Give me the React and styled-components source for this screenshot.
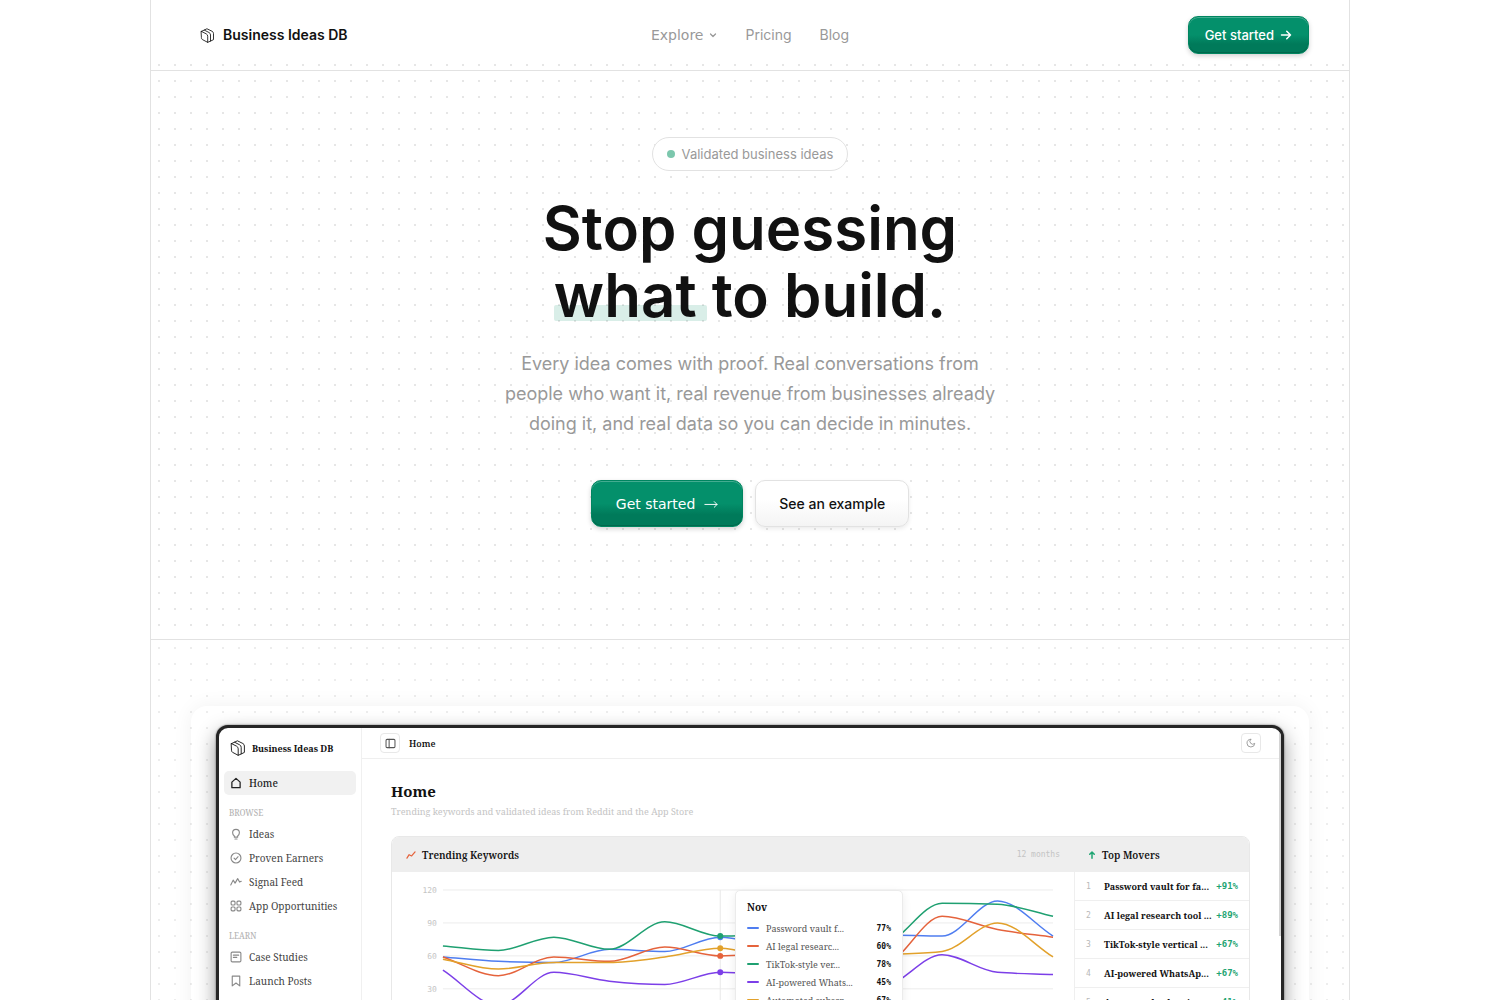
import React from 'react';
import styled, { createGlobalStyle, css } from 'styled-components';

const sans = `Inter, 'Liberation Sans', sans-serif`;
const humanist = `'DejaVu Sans', 'Noto Sans', sans-serif`;
const serif = `'Noto Serif', 'Liberation Serif', serif`;
const mono = `'DejaVu Sans Mono', 'Liberation Mono', monospace`;

const colors = {
  text: '#111111',
  muted: '#999999',
  line: '#e2e2e2',
  green: '#04906b',
  up: '#1fa573',
};

const GlobalStyle = createGlobalStyle`
  *, *::before, *::after {
    box-sizing: border-box;
  }
  body {
    margin: 0;
    background: #fff;
    color: ${colors.text};
    font-family: ${sans};
  }
  h1, h2, h3, p, ul, ol {
    margin: 0;
    padding: 0;
  }
  ul, ol {
    list-style: none;
  }
  a {
    color: inherit;
    text-decoration: none;
  }
  button {
    font: inherit;
    cursor: pointer;
  }
`;

const dots = (color) => css`
  background-image: radial-gradient(circle, ${color} 1px, transparent 1px);
  background-size: 16px 16px;
`;

const Page = styled.div`
  height: 100vh;
  overflow: hidden;
`;

const Shell = styled.div`
  max-width: 1200px;
  margin: 0 auto;
  border: 1px solid ${colors.line};
  border-width: 0 1px;
`;

const Header = styled.header`
  ${dots('#e6e6e6')}
  background-repeat: repeat-x;
  background-position: 0 57px;
  display: grid;
  grid-template-columns: 1fr auto 1fr;
  align-items: center;
  padding: 16px 40px;
  border-bottom: 1px solid ${colors.line};
`;

const Brand = styled.a`
  display: flex;
  align-items: center;
  gap: 8px;
  padding-left: 9px;
  font-size: 14px;
  font-weight: 600;
  line-height: 20px;
`;

const Nav = styled.nav`
  display: flex;
  align-items: center;
  gap: 28px;
  color: ${colors.muted};
  font-size: 14px;
  line-height: 20px;
`;

const NavButton = styled.button`
  display: flex;
  align-items: center;
  gap: 6px;
  padding: 0;
  border: 0;
  background: none;
  color: inherit;
  font-family: ${humanist};
  font-size: 14px;
`;

const PrimaryButton = styled.button`
  display: flex;
  align-items: center;
  justify-content: center;
  justify-self: end;
  gap: ${(p) => (p.$large ? 8 : 6)}px;
  height: ${(p) => (p.$large ? 47 : 38)}px;
  padding: 0 ${(p) => (p.$large ? 24 : 16)}px;
  border: 1px solid #008560;
  border-radius: 10px;
  background: linear-gradient(${colors.green} 50%, #007a5a 75%);
  box-shadow: inset 0 1px 0 rgba(255, 255, 255, 0.25),
    inset 0 -1px 0 rgba(0, 50, 36, 0.25), 0 2px 5px rgba(0, 0, 0, 0.18);
  color: #fff;
  font-family: ${(p) => (p.$large ? humanist : sans)};
  font-size: ${(p) => (p.$large ? 14 : 13)}px;
  font-weight: ${(p) => (p.$large ? 400 : 500)};
`;

const SecondaryButton = styled.button`
  height: 47px;
  padding: 0 23px;
  border: 1px solid ${colors.line};
  border-radius: 10px;
  background: linear-gradient(#fff 40%, #f4f4f4);
  box-shadow: 0 2px 4px rgba(0, 0, 0, 0.08);
  color: ${colors.text};
  font-size: 14px;
  font-weight: 500;
`;

const Hero = styled.section`
  ${dots('#e6e6e6')}
  background-position: 0 2px;
  display: flex;
  flex-direction: column;
  align-items: center;
  padding: 66px 24px 112px;
  border-bottom: 1px solid ${colors.line};
  text-align: center;
`;

const Pill = styled.p`
  display: flex;
  align-items: center;
  gap: 7px;
  height: 34px;
  padding: 0 14px;
  border: 1px solid ${colors.line};
  border-radius: 17px;
  background: #fff;
  color: ${colors.muted};
  font-size: 13px;
`;

const PillDot = styled.span`
  width: 8px;
  height: 8px;
  border-radius: 50%;
  background: #7cc7ad;
`;

const Title = styled.h1`
  margin-top: 24px;
  font-size: 60px;
  font-weight: 600;
  line-height: 67px;
`;

const Marked = styled.span`
  position: relative;
  z-index: 0;
  display: inline-block;
  &::after {
    content: '';
    position: absolute;
    z-index: -1;
    left: 0;
    right: -10px;
    bottom: 8px;
    height: 16px;
    border-radius: 2px;
    background: rgba(0, 143, 104, 0.15);
  }
`;

const Lead = styled.p`
  max-width: 520px;
  margin: 20px 0 41px;
  color: ${colors.muted};
  font-size: 18px;
  line-height: 30px;
`;

const Actions = styled.div`
  display: flex;
  gap: 12px;
`;

const Showcase = styled.section`
  ${dots('#ededed')}
  padding: 66px 40px;
`;

const Stage = styled.div`
  padding: 19px 25px 24px;
  border-radius: 16px;
  box-shadow: 0 0 20px rgba(0, 0, 0, 0.06);
`;

const Screen = styled.div`
  display: grid;
  grid-template-columns: 143px 1fr 2px;
  overflow: hidden;
  border: 3px solid #262626;
  border-radius: 12px;
  background: #fff;
  box-shadow: 0 8px 20px rgba(0, 0, 0, 0.42), 0 0 2px rgba(0, 0, 0, 0.6);
  font-family: ${serif};
`;

const Sidebar = styled.aside`
  padding: 0 5px;
  border-right: 1px solid #f0f0f0;
`;

const AppBrand = styled.div`
  display: flex;
  align-items: center;
  gap: 6px;
  height: 40px;
  margin-bottom: 3px;
  padding-left: 6px;
  font-size: 9px;
  font-weight: 700;
`;

const MenuLabel = styled.p`
  margin: 12px 0 3px;
  padding-left: 5px;
  color: #b5b5b5;
  font-size: 8px;
  font-weight: 500;
  line-height: 12px;
`;

const MenuItem = styled.a`
  display: flex;
  align-items: center;
  gap: 7px;
  height: 24px;
  padding-left: 6px;
  border-radius: 5px;
  background: ${(p) => (p.$active ? '#f1f1f1' : 'none')};
  color: ${(p) => (p.$active ? '#222' : '#444')};
  font-size: 10px;
  font-weight: ${(p) => (p.$active ? 500 : 400)};
  svg {
    color: ${(p) => (p.$active ? '#222' : '#888')};
  }
`;

const Topbar = styled.div`
  display: flex;
  align-items: center;
  gap: 9px;
  height: 31px;
  padding: 0 18px;
  border-bottom: 1px solid #efefef;
  font-size: 9px;
  font-weight: 600;
`;

const IconButton = styled.button`
  display: flex;
  align-items: center;
  justify-content: center;
  width: 20px;
  height: 20px;
  margin-left: ${(p) => (p.$end ? 'auto' : 0)};
  padding: 0;
  border: 1px solid #e8e8e8;
  border-radius: 4px;
  background: #fff;
  color: ${(p) => (p.$end ? '#999' : '#555')};
`;

const Content = styled.div`
  padding: 21px 29px 30px;
`;

const AppTitle = styled.h2`
  font-size: 15px;
  font-weight: 700;
  line-height: 22px;
`;

const AppSubtitle = styled.p`
  margin: 3px 0 17px;
  color: #c4c4c4;
  font-size: 9px;
  line-height: 14px;
`;

const Panel = styled.div`
  display: grid;
  grid-template-columns: 1fr 175px;
  border: 1px solid #e8e8e8;
  border-radius: 8px;
`;

const PanelHead = styled.div`
  display: flex;
  align-items: center;
  gap: 6px;
  height: 35px;
  padding: 0 14px;
  border-radius: ${(p) => (p.$end ? '0 7px 0 0' : '7px 0 0 0')};
  background: #eeeeee;
  h3 {
    font-size: 10px;
    font-weight: 600;
    line-height: 14px;
  }
`;

const Period = styled.span`
  margin-left: auto;
  color: #c4c4c4;
  font-family: ${mono};
  font-size: 8px;
`;

const ChartArea = styled.div`
  position: relative;
  svg {
    display: block;
    width: 100%;
    height: auto;
  }
  text {
    fill: #c4c4c4;
    font-family: ${mono};
    font-size: 8px;
    text-anchor: end;
  }
`;

const Tooltip = styled.div`
  position: absolute;
  top: 18px;
  left: calc(50% + 2px);
  width: 168px;
  padding: 8px 11px;
  border: 1px solid #ebebeb;
  border-radius: 5px;
  background: #fff;
  box-shadow: 0 3px 10px rgba(0, 0, 0, 0.08);
  color: #555;
  font-size: 9px;
  strong {
    display: block;
    margin-bottom: 4px;
    color: ${colors.text};
    font-size: 10px;
    line-height: 16px;
  }
`;

const TooltipRow = styled.li`
  display: flex;
  align-items: center;
  height: 18px;
  gap: 7px;
  b {
    margin-left: auto;
    color: ${colors.text};
    font-family: ${mono};
    font-size: 8px;
  }
`;

const Swatch = styled.span`
  width: 12px;
  height: 2px;
  border-radius: 1px;
  background: ${(p) => p.$color};
`;

const Movers = styled.ol`
  border-left: 1px solid #efefef;
`;

const Mover = styled.li`
  display: flex;
  align-items: center;
  height: 29px;
  padding: 0 11px;
  border-bottom: 1px solid #efefef;
  font-size: 9px;
  font-weight: 700;
`;

const Rank = styled.span`
  width: 18px;
  color: #b8b8b8;
  font-family: ${mono};
  font-size: 8px;
  font-weight: 400;
`;

const Change = styled.span`
  margin-left: auto;
  color: ${colors.up};
  font-family: ${mono};
  font-size: 9px;
`;

const Scrollbar = styled.div`
  height: 208px;
  background: #d4d4d4;
`;

const series = [
  { name: 'Password vault f...', value: '77%', color: '#4f7df0', data: [59, 55, 54, 66, 64, 77, 70, 75, 79, 78, 110, 78] },
  { name: 'AI legal researc...', value: '60%', color: '#e5633c', data: [59, 42, 59, 55, 68, 60, 62, 46, 53, 96, 84, 77] },
  { name: 'TikTok-style ver...', value: '78%', color: '#1fa071', data: [69, 65, 77, 66, 91, 78, 79, 62, 71, 108, 107, 96] },
  { name: 'AI-powered Whats...', value: '45%', color: '#7c3fe8', data: [47, 15, 45, 37, 34, 45, 40, 25, 32, 61, 45, 43] },
  { name: 'Automated subscr...', value: '67%', color: '#e2a12b', data: [57, 48, 54, 54, 59, 67, 58, 57, 61, 64, 90, 59] },
];

const movers = [
  ['Password vault for fa...', '+91%'],
  ['AI legal research tool ...', '+89%'],
  ['TikTok-style vertical ...', '+67%'],
  ['AI-powered WhatsAp...', '+67%'],
  ['Automated subscript...', '+41%'],
];

const x0 = 51;
const step = 611 / 11;
const toY = (v) => 18 + (120 - v) * 1.1;

// monotone cubic through evenly spaced points
function curve(data) {
  const pts = data.map((v, i) => [x0 + i * step, toY(v)]);
  const slopes = pts.slice(1).map((p, i) => (p[1] - pts[i][1]) / step);
  const tangents = pts.map((_, i) => {
    if (i === 0) return slopes[0];
    if (i === pts.length - 1) return slopes[i - 1];
    const a = slopes[i - 1];
    const b = slopes[i];
    if (a * b <= 0) return 0;
    return Math.sign(a) * Math.min(Math.abs(a), Math.abs(b), Math.abs(a + b) / 4) * 2;
  });
  const t = step / 3;
  return pts.slice(1).reduce((d, p, i) => {
    const q = pts[i];
    return `${d}C${q[0] + t},${q[1] + tangents[i] * t} ${p[0] - t},${p[1] - tangents[i + 1] * t} ${p[0]},${p[1]}`;
  }, `M${pts[0][0]},${pts[0][1]}`);
}

const Icon = ({ size = 12, width = 1.5, children }) => (
  <svg
    width={size}
    height={size}
    viewBox="0 0 16 16"
    fill="none"
    stroke="currentColor"
    strokeWidth={width}
    strokeLinecap="round"
    strokeLinejoin="round"
    aria-hidden="true"
  >
    {children}
  </svg>
);

const Logo = ({ size }) => (
  <Icon size={size} width={0.9}>
    <path d="M1.500 3.600 6.600 6.200Q8.200 7 8.200 8.800V15.300L2.500 12.300Q1.500 11.700 1.500 10.600Z" />
    <path d="M1.500 3.600 4.500 2.200 9.600 4.800Q11.200 5.600 11.200 7.400V14L8.200 15.300" />
    <path d="M4.500 2.200 7.400.8 12.900 3.500Q14.400 4.300 14.400 6V12.400L11.200 14" />
  </Icon>
);

const icons = {
  home: <path d="M2.500 6.800 8 1.800l5.500 5V14.200h-11Z" strokeWidth="1.700" />,
  ideas: <path d="M5.800 10.600C4.400 9.700 3.500 8.200 3.500 6.300a4.500 4.500 0 0 1 9 0c0 1.900-.9 3.400-2.300 4.300v1.600H5.800ZM6.600 14.600h2.800" />,
  earners: (
    <>
      <circle cx="8" cy="8" r="6.600" />
      <path d="m5.400 8.200 1.900 1.900 3.500-3.800" />
    </>
  ),
  signal: <path d="M1 12 4.200 5.500l2.600 4 3.400-6 2.600 4.600L15 7" />,
  apps: (
    <>
      <rect x="1.500" y="1.500" width="5.200" height="5.200" rx="1.400" />
      <rect x="9.300" y="1.500" width="5.200" height="5.200" rx="1.400" />
      <rect x="1.500" y="9.300" width="5.200" height="5.200" rx="1.400" />
      <rect x="9.300" y="9.300" width="5.200" height="5.200" rx="1.400" />
    </>
  ),
  cases: (
    <>
      <rect x="1.500" y="1.500" width="13" height="13" rx="1.600" />
      <path d="M4.500 5.500h7M4.500 8.500h4.500" />
    </>
  ),
  posts: <path d="M3 1.500h10v13l-5-3.800-5 3.800Z" />,
};

const browse = [
  ['ideas', 'Ideas'],
  ['earners', 'Proven Earners'],
  ['signal', 'Signal Feed'],
  ['apps', 'App Opportunities'],
];

const learn = [
  ['cases', 'Case Studies'],
  ['posts', 'Launch Posts'],
];

function MenuList({ items }) {
  return (
    <ul>
      {items.map(([icon, label]) => (
        <li key={icon}>
          <MenuItem href="#">
            <Icon>{icons[icon]}</Icon>
            {label}
          </MenuItem>
        </li>
      ))}
    </ul>
  );
}

function TrendChart() {
  const cursor = x0 + 5 * step;
  return (
    <ChartArea>
      <svg viewBox="0 0 683 170" role="img" aria-label="Keyword trends over 12 months">
        {[120, 90, 60, 30, 0].map((v) => (
          <g key={v}>
            <line x1={x0} x2="662" y1={toY(v)} y2={toY(v)} stroke="#ececec" />
            <text x="45" y={toY(v) + 3}>{v}</text>
          </g>
        ))}
        <line x1={cursor} x2={cursor} y1="18" y2="150" stroke="#e8e8e8" />
        {series.map((s) => (
          <path key={s.name} d={curve(s.data)} fill="none" stroke={s.color} strokeWidth="1.5" />
        ))}
        {series.map((s) => (
          <circle key={s.name} cx={cursor} cy={toY(s.data[5])} r="3" fill={s.color} />
        ))}
      </svg>
      <Tooltip>
        <strong>Nov</strong>
        <ul>
          {series.map((s) => (
            <TooltipRow key={s.name}>
              <Swatch $color={s.color} />
              {s.name}
              <b>{s.value}</b>
            </TooltipRow>
          ))}
        </ul>
      </Tooltip>
    </ChartArea>
  );
}

function AppPreview() {
  return (
    <Screen>
      <Sidebar>
        <AppBrand>
          <Logo size={16} />
          Business Ideas DB
        </AppBrand>
        <MenuItem href="#" $active>
          <Icon>{icons.home}</Icon>
          Home
        </MenuItem>
        <MenuLabel>BROWSE</MenuLabel>
        <MenuList items={browse} />
        <MenuLabel>LEARN</MenuLabel>
        <MenuList items={learn} />
      </Sidebar>
      <div>
        <Topbar>
          <IconButton aria-label="Toggle sidebar">
            <Icon size={11}>
              <rect x="1.500" y="2" width="13" height="12" rx="1.500" />
              <path d="M6 2v12" />
            </Icon>
          </IconButton>
          Home
          <IconButton $end aria-label="Dark mode">
            <Icon size={10}>
              <path d="M7.500 2A4.500 4.500 0 0 0 14 8.500 6.200 6.200 0 1 1 7.500 2Z" />
            </Icon>
          </IconButton>
        </Topbar>
        <Content>
          <AppTitle>Home</AppTitle>
          <AppSubtitle>Trending keywords and validated ideas from Reddit and the App Store</AppSubtitle>
          <Panel>
            <div>
              <PanelHead>
                <Icon size={10}>
                  <path d="M1.500 13 5 7.500l4 2L14.500 3" stroke="#e5633c" strokeWidth="2" />
                </Icon>
                <h3>Trending Keywords</h3>
                <Period>12 months</Period>
              </PanelHead>
              <TrendChart />
            </div>
            <div>
              <PanelHead $end>
                <Icon size={8}>
                  <path d="M8 14.500V2M3.500 6.500 8 2l4.500 4.500" stroke={colors.up} strokeWidth="3" />
                </Icon>
                <h3>Top Movers</h3>
              </PanelHead>
              <Movers>
                {movers.map(([name, change], idx) => (
                  <Mover key={name}>
                    <Rank>{idx + 1}</Rank>
                    {name}
                    <Change>{change}</Change>
                  </Mover>
                ))}
              </Movers>
            </div>
          </Panel>
        </Content>
      </div>
      <Scrollbar />
    </Screen>
  );
}

export default function App() {
  return (
    <Page>
      <GlobalStyle />
      <Shell>
        <Header>
          <Brand href="#">
            <Logo size={15} />
            Business Ideas DB
          </Brand>
          <Nav>
            <NavButton>
              Explore
              <Icon size={8} width={2.5}>
                <path d="m3 6 5 5 5-5" />
              </Icon>
            </NavButton>
            <a href="#">Pricing</a>
            <a href="#">Blog</a>
          </Nav>
          <PrimaryButton>
            Get started
            <Icon width={2}>
              <path d="M2 8h12M9 3l5 5-5 5" />
            </Icon>
          </PrimaryButton>
        </Header>
        <main>
          <Hero>
            <Pill>
              <PillDot />
              Validated business ideas
            </Pill>
            <Title>
              Stop guessing
              <br />
              <Marked>what</Marked> to build.
            </Title>
            <Lead>
              Every idea comes with proof. Real conversations from people who
              want it, real revenue from businesses already doing it, and real
              data so you can decide in minutes.
            </Lead>
            <Actions>
              <PrimaryButton $large>
                Get started
                <Icon size={15} width={1}>
                  <path d="M2 9h13M12 6l3 3-3 3" />
                </Icon>
              </PrimaryButton>
              <SecondaryButton>See an example</SecondaryButton>
            </Actions>
          </Hero>
          <Showcase>
            <Stage>
              <AppPreview />
            </Stage>
          </Showcase>
        </main>
      </Shell>
    </Page>
  );
}
